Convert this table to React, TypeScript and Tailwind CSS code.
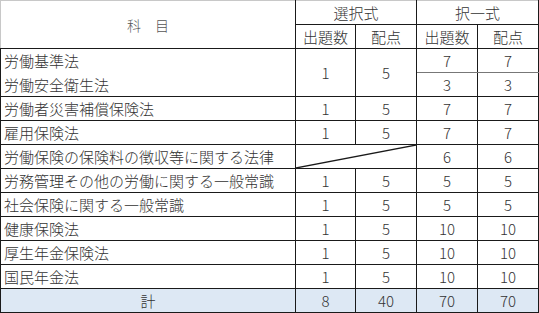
import React from 'react';

const rows = [
  { name: '労働者災害補償保険法', q: '1', p: '5', q2: '7', p2: '7' },
  { name: '雇用保険法', q: '1', p: '5', q2: '7', p2: '7' },
  { name: '労働保険の保険料の徴収等に関する法律', q: '', p: '', q2: '6', p2: '6', diag: true },
  { name: '労務管理その他の労働に関する一般常識', q: '1', p: '5', q2: '5', p2: '5' },
  { name: '社会保険に関する一般常識', q: '1', p: '5', q2: '5', p2: '5' },
  { name: '健康保険法', q: '1', p: '5', q2: '10', p2: '10' },
  { name: '厚生年金保険法', q: '1', p: '5', q2: '10', p2: '10' },
  { name: '国民年金法', q: '1', p: '5', q2: '10', p2: '10' },
];

const td = 'border border-[#1a1a1a] text-center p-0 h-[24px]';
const name = 'border border-[#1a1a1a] text-left pl-[3px] p-0 h-[24px] whitespace-nowrap';

export default function App() {
  return (
    <div className="w-[539px] h-[313px] bg-white overflow-hidden font-['Noto_Sans_CJK_JP',sans-serif] font-light text-[15px] leading-none text-[#333]">
      <table className="table-fixed border-collapse w-[538px]">
        <colgroup>
          <col className="w-[295px]" />
          <col className="w-[60px]" />
          <col className="w-[61px]" />
          <col className="w-[61px]" />
          <col className="w-[61px]" />
        </colgroup>
        <thead>
          <tr>
            <th rowSpan={2} className="border border-[#1a1a1a] border-t-[#c8c8c8] border-l-[#c8c8c8] font-light text-center p-0 h-[48px]">
              <span className="text-[14px] text-[#555]">科　目</span>
            </th>
            <th colSpan={2} className="border border-[#1a1a1a] border-t-[#c8c8c8] font-light text-center p-0 h-[24px]">選択式</th>
            <th colSpan={2} className="border border-[#1a1a1a] border-t-[#c8c8c8] font-light text-center p-0 h-[24px]">択一式</th>
          </tr>
          <tr>
            <th className={`${td} font-light`}>出題数</th>
            <th className={`${td} font-light`}>配点</th>
            <th className={`${td} font-light`}>出題数</th>
            <th className={`${td} font-light`}>配点</th>
          </tr>
        </thead>
        <tbody>
          <tr>
            <td className={`${name} border-b-0`}>労働基準法</td>
            <td rowSpan={2} className={td}>1</td>
            <td rowSpan={2} className={td}>5</td>
            <td className={`${td} border-b-[#777]`}>7</td>
            <td className={`${td} border-b-[#777]`}>7</td>
          </tr>
          <tr>
            <td className={`${name} border-t-0`}>労働安全衛生法</td>
            <td className={td}>3</td>
            <td className={td}>3</td>
          </tr>
          {rows.map((r) => (
            <tr key={r.name}>
              <td className={name}>{r.name}</td>
              {r.diag ? (
                <td colSpan={2} className={`${td} relative`}>
                  <svg className="absolute inset-0 w-full h-full" viewBox="0 0 121 24" preserveAspectRatio="none">
                    <line x1="0" y1="24" x2="121" y2="0" stroke="#1a1a1a" strokeWidth="1.3" />
                  </svg>
                </td>
              ) : (
                <>
                  <td className={td}>{r.q}</td>
                  <td className={td}>{r.p}</td>
                </>
              )}
              <td className={td}>{r.q2}</td>
              <td className={td}>{r.p2}</td>
            </tr>
          ))}
          <tr className="bg-[#dde8f4]">
            <td className={td}>計</td>
            <td className={td}>8</td>
            <td className={td}>40</td>
            <td className={td}>70</td>
            <td className={td}>70</td>
          </tr>
        </tbody>
      </table>
    </div>
  );
}
